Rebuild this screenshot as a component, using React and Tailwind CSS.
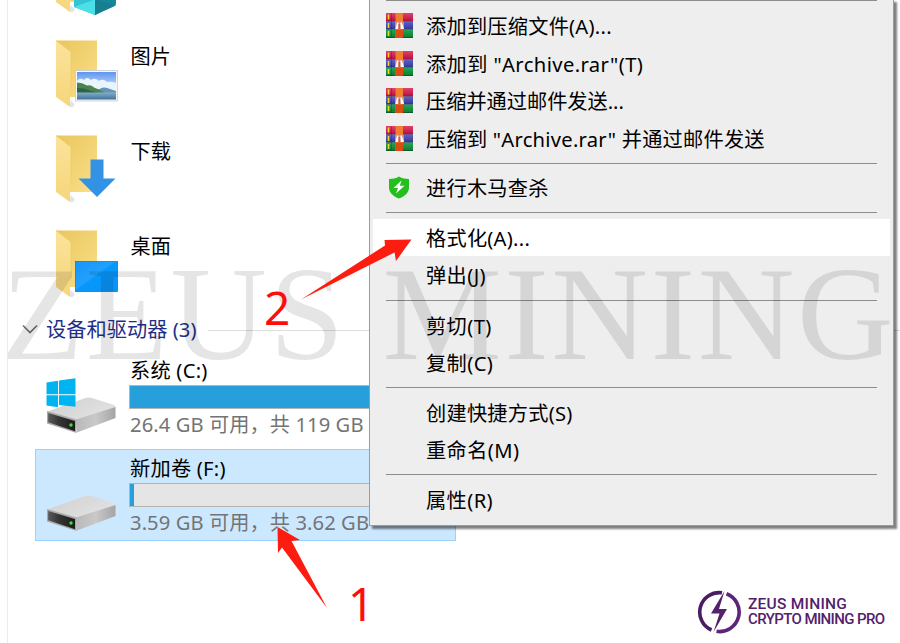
import clsx from 'clsx';

const MENU = [
  { type: 'item', icon: 'rar', label: '添加到压缩文件(A)...' },
  { type: 'item', icon: 'rar', label: '添加到 "Archive.rar"(T)', wide: true },
  { type: 'item', icon: 'rar', label: '压缩并通过邮件发送...', plain: true },
  { type: 'item', icon: 'rar', label: '压缩到 "Archive.rar" 并通过邮件发送' },
  { type: 'sep', size: 'h-[12px]' },
  { type: 'item', icon: 'shield', label: '进行木马查杀' },
  { type: 'sep', size: 'h-[12px]' },
  { type: 'item', label: '格式化(A)...', active: true },
  { type: 'item', label: '弹出(J)', wide: true },
  { type: 'sep', size: 'h-[13px]' },
  { type: 'item', label: '剪切(T)', wide: true },
  { type: 'item', label: '复制(C)', wide: true },
  { type: 'sep', size: 'h-[12px]' },
  { type: 'item', label: '创建快捷方式(S)' },
  { type: 'item', label: '重命名(M)', wide: true },
  { type: 'sep', size: 'h-[12.5px]' },
  { type: 'item', label: '属性(R)', wide: true },
];

const FOLDERS = [
  { kind: 'objects', label: '' },
  { kind: 'pictures', label: '图片' },
  { kind: 'downloads', label: '下载' },
  { kind: 'desktop', label: '桌面' },
];

const DRIVES = [
  { name: '系统 (C:)', info: '26.4 GB 可用，共 119 GB', used: 78, system: true },
  { name: '新加卷 (F:)', info: '3.59 GB 可用，共 3.62 GB', used: 1.2, selected: true },
];

const FolderIcon = ({ kind }) => (
  <svg width="66" height="70" viewBox="0 0 66 70" className="shrink-0">
    <defs>
      <linearGradient id="fBack" x1="0" y1="0" x2="1" y2="1">
        <stop offset="0" stopColor="#e9c55c" />
        <stop offset="1" stopColor="#fbe08a" />
      </linearGradient>
      <linearGradient id="fFront" x1="0" y1="0" x2="0" y2="1">
        <stop offset="0" stopColor="#fbe39a" />
        <stop offset="1" stopColor="#f6d67c" />
      </linearGradient>
      <linearGradient id="sky" x1="0" y1="0" x2="0" y2="1">
        <stop offset="0" stopColor="#5f95ee" />
        <stop offset="0.5" stopColor="#b8d6f8" />
        <stop offset="1" stopColor="#cfe4f4" />
      </linearGradient>
      <linearGradient id="lake" x1="0" y1="0" x2="0" y2="1">
        <stop offset="0" stopColor="#86aecb" />
        <stop offset="1" stopColor="#3f729c" />
      </linearGradient>
      <linearGradient id="desk" x1="0" y1="0" x2="1" y2="1">
        <stop offset="0" stopColor="#1496fb" />
        <stop offset="0.45" stopColor="#22a0fc" />
        <stop offset="0.5" stopColor="#0797fb" />
        <stop offset="1" stopColor="#0a93f5" />
      </linearGradient>
    </defs>
    <path d="M14 66l3 1.5 3-2.5-4-5z" fill="#e4e4e4" />
    <path d="M1 0.5h41V57H14z" fill="url(#fBack)" />
    <path d="M1 0.5L16 12v37l-1 1v17L1 57z" fill="url(#fFront)" />
    <path d="M1 0.5L16 12v37" fill="none" stroke="#eecb68" strokeWidth="0.8" />
    {kind === 'pictures' && (
      <g>
        <rect x="20.5" y="30.5" width="42" height="30.5" fill="#f6f9fc" stroke="#c3cad2" strokeWidth="0.8" />
        <rect x="22" y="32" width="39" height="27.5" fill="url(#sky)" />
        <path d="M22 41q3-4 7-1 3-4 7 0 4-3 8 1 4-3 8 1 5-1 9 1v8H22z" fill="#eaf4fd" />
        <path d="M40 52q7-6 12-4l9 3v2H40z" fill="#6295b8" />
        <path d="M22 42.5q5 0 10 3 4-1 7 2 6 2 12 6H22z" fill="#4a8350" />
        <path d="M22 48q8 0 14 3l8 2H22z" fill="#2c6546" />
        <rect x="22" y="52.5" width="39" height="7" fill="url(#lake)" />
      </g>
    )}
    {kind === 'downloads' && <path d="M35.5 24.5h13v19H60.5L42 62 23.5 43.5h12z" fill="#3492e4" />}
    {kind === 'desktop' && (
      <rect x="20.5" y="31.5" width="42" height="30" fill="url(#desk)" stroke="#0b7fd3" strokeWidth="0.8" />
    )}
    {kind === 'objects' && (
      <g>
        <path d="M19 45l21-9 21 9v13L40 70 19 62z" fill="#35c3d2" />
        <path d="M40 54.5l21-8v13L40 70z" fill="#14889a" />
        <path d="M40 54.5L19 62l21 8z" fill="#4be0e8" />
        <path d="M40 54.5l21 6L40 70z" fill="#177f90" />
      </g>
    )}
  </svg>
);

const DriveIcon = ({ system }) => (
  <svg width="74" height="56" viewBox="0 0 74 56" className="mt-[26px] shrink-0">
    <defs>
      <linearGradient id="dTop" x1="0" y1="0" x2="1" y2="0.6">
        <stop offset="0" stopColor="#cfcfcf" />
        <stop offset="1" stopColor="#e2e2e4" />
      </linearGradient>
      <linearGradient id="dSide" x1="0" y1="0" x2="1" y2="0">
        <stop offset="0" stopColor="#b9b9ba" />
        <stop offset="0.5" stopColor="#c9c9ca" />
        <stop offset="1" stopColor="#a4a4a6" />
      </linearGradient>
      <linearGradient id="dFace" x1="0" y1="0" x2="1" y2="0">
        <stop offset="0" stopColor="#5a5a5a" />
        <stop offset="0.4" stopColor="#353535" />
        <stop offset="1" stopColor="#1c1c1c" />
      </linearGradient>
    </defs>
    <path d="M1 33.500L38 20.500q4-1.500 8-0.500l22 7q2 1 1.500 3L31 42z" fill="url(#dTop)" />
    <path d="M30 41.500L69.500 29v11L31 54.500z" fill="url(#dSide)" />
    <path d="M1 33l29.500 8.500V55L1 45.500z" fill="#a9a9a9" />
    <path d="M2.200 35L29 43v10.200L2.200 44.300z" fill="url(#dFace)" />
    <circle cx="25" cy="47" r="1.700" fill="#3fe23c" />
    {system && (
      <path
        d="M0.500 4.500L12 2.800v13.500H0.500zM13 2.600L29.500 0.300v15.900H13zM0.500 17.300H12v12L0.500 27.500zM13 17.300h16.500v11.400L13 26.900z"
        fill="#00b4f1"
      />
    )}
  </svg>
);

const RarIcon = () => (
  <svg width="27" height="25" viewBox="0 0 27 25">
    <defs>
      <linearGradient id="rRed" x1="0" y1="0" x2="0" y2="1">
        <stop offset="0" stopColor="#e2416b" />
        <stop offset="1" stopColor="#b40f3e" />
      </linearGradient>
      <linearGradient id="rBlue" x1="0" y1="0" x2="0" y2="1">
        <stop offset="0" stopColor="#5b62c9" />
        <stop offset="1" stopColor="#333794" />
      </linearGradient>
      <linearGradient id="rGreen" x1="0" y1="0" x2="0" y2="1">
        <stop offset="0" stopColor="#26a552" />
        <stop offset="1" stopColor="#0b7a30" />
      </linearGradient>
    </defs>
    <rect width="27" height="8.500" fill="url(#rRed)" />
    <rect y="8.500" width="27" height="8" fill="url(#rBlue)" />
    <rect y="16.500" width="27" height="8.500" fill="url(#rGreen)" />
    <path d="M0 8.300h27M0 16.300h27M0 24.500h27" stroke="#1b1735" strokeOpacity="0.350" />
    <path d="M2.500 1.500v5M2.500 10v5M2.500 18v5" stroke="#f4d429" strokeWidth="1.600" />
    <path d="M5.500 0v25" stroke="#201838" strokeOpacity="0.300" />
    <rect x="9.500" width="7.500" height="25" fill="#f27d2c" />
    <rect x="9.500" y="16.500" width="7.500" height="8.500" fill="#da4d12" />
    <path d="M9 9.500q0-1 1-1h7q1 0 1 1V16H9z" fill="#d98a76" />
    <path d="M9.500 16l1.500-6.500h1.500L12.300 16zM14.300 9.500h1.500L18 16h-3.300z" fill="#fff" />
    <path d="M12.500 11h1.700v5h-1.700z" fill="#e0503c" />
  </svg>
);

const ShieldIcon = () => (
  <svg width="22" height="23" viewBox="0 0 22 23" className="-ml-[2px]">
    <path d="M11 0.500C14 2.300 17.500 3 21 3v8.500c0 5.500-4.500 9-10 11-5.500-2-10-5.500-10-11V3c3.500 0 7-0.700 10-2.500z" fill="#25bf1d" />
    <path d="M13.500 4.500L5.500 12h4.500l-2 5.500 8.500-7.800h-4.700z" fill="#fff" />
  </svg>
);

const Folder = ({ kind, label }) => (
  <div className="flex h-[95.200px] items-start">
    <FolderIcon kind={kind} />
    <span className="ml-[9.500px] leading-[32px]">{label}</span>
  </div>
);

const Drive = ({ name, info, used, system, selected }) => (
  <div
    className={clsx(
      'flex h-[92px] w-[421px] border pl-[10px]',
      selected ? 'border-[#99d1ff] bg-[#cce8ff]' : 'border-transparent'
    )}
  >
    <DriveIcon system={system} />
    <div className="ml-[9px] mt-[4px] flex-1">
      <div className="pl-px leading-[28px] tracking-[0.250px]">{name}</div>
      <div className="mt-px flex h-[24px] w-[310px] border border-[#b5b5b5] bg-[#e5e5e5]">
        <div className="bg-[#269fdb]" style={{ width: `${used}%` }} />
      </div>
      <div className="mt-px whitespace-nowrap pl-px leading-[29px] tracking-[0.080px] text-[#747474]">{info}</div>
    </div>
  </div>
);

const ContextMenu = () => (
  <div className="absolute -top-px left-[369px] w-[525px] border border-[#9b9b9b] bg-[#eeeeee] px-[3px] pb-[6px] text-black shadow-[3px_3px_2px_rgba(0,0,0,0.5)]">
    <div className="mx-[13px] h-[7px] border-t border-[#8c8c8c]" />
    {MENU.map((m, i) =>
      m.type === 'sep' ? (
        <div key={i} className={clsx('mx-[13px] flex items-center', m.size)}>
          <div className="h-px w-full bg-[#8c8c8c]" />
        </div>
      ) : (
        <div key={i} className={clsx('flex h-[37.500px] items-center', m.active && 'bg-white')}>
          <div className="flex w-[53px] justify-center">
            {m.icon === 'rar' && <RarIcon />}
            {m.icon === 'shield' && <ShieldIcon />}
          </div>
          <span
            className={clsx(
              'whitespace-nowrap pt-px leading-[28px]',
              m.wide ? 'tracking-[0.400px]' : m.plain ? 'tracking-normal' : 'tracking-[0.250px]'
            )}
          >
            {m.label}
          </span>
        </div>
      )
    )}
  </div>
);

const Brand = () => (
  <div className="absolute left-[697px] top-[590px] flex items-center text-[#54216b]">
    <svg width="45" height="44" viewBox="0 0 45 44">
      <path d="M25 2.800A19.500 19.500 0 0 0 14.500 40" fill="none" stroke="#4a1d60" strokeWidth="3.600" />
      <path d="M29.500 3.800A19.500 19.500 0 0 1 19.500 41.300" fill="none" stroke="#5d2578" strokeWidth="3.600" />
      <path d="M27.500 1L14 23.500h8.500L16.500 42 30 19h-8z" fill="#54216b" />
    </svg>
    <div className="ml-[6px] whitespace-nowrap font-[Roboto,sans-serif] font-medium leading-[15.500px]">
      <div className="text-[15.500px] tracking-[0.250px]">ZEUS MINING</div>
      <div className="text-[15px] tracking-[-0.600px]">CRYPTO MINING PRO</div>
    </div>
  </div>
);

export default function App() {
  return (
    <div className="relative h-[643px] w-[900px] overflow-hidden bg-white font-['Noto_Sans','Noto_Sans_CJK_SC',sans-serif] text-[20.200px] text-black">
      <div className="ml-[7px] flow-root h-full border-l border-[#ececec]">
        <div className="-mt-[55.500px] pl-[47px]">
          {FOLDERS.map((f) => (
            <Folder key={f.kind} {...f} />
          ))}
        </div>
        <div className="-mt-[10.500px] flex h-[28px] items-center pl-[14px] text-[#1e2f87]">
          <svg width="16" height="10" viewBox="0 0 16 10" fill="none" stroke="#6d6d6d" strokeWidth="1.600">
            <path d="M1 1.500l7 7 7-7" />
          </svg>
          <span className="ml-[8px] whitespace-nowrap tracking-[0.050px]">设备和驱动器 (3)</span>
          <div className="ml-[11px] mt-[3px] h-px flex-1 bg-[#dedede]" />
        </div>
        <div className="mt-[8px] flex flex-col gap-[6px] pl-[27px]">
          {DRIVES.map((d) => (
            <Drive key={d.name} {...d} />
          ))}
        </div>
      </div>

      <ContextMenu />

      {/* Watermark */}
      <div className="absolute left-[1.500px] top-[240px] whitespace-nowrap font-['Liberation_Serif',serif] text-[134px] leading-[148px] tracking-[2.500px] text-black/10">
        ZEUS MINING
      </div>

      {/* Step markers */}
      <svg width="900" height="643" viewBox="0 0 900 643" className="pointer-events-none absolute inset-0" fill="#fd1d10">
        <path d="M301 299.500L385 245.500 384.500 240 411.500 239.500 396 261 394.500 252.500z" />
        <path d="M277.500 527L300 540 291.500 541 327 608 282 547.500 278 553z" />
      </svg>
      <span className="absolute left-[264px] top-[275px] text-[46px] leading-[64px] text-[#ff0d0d]">2</span>
      <span className="absolute left-[348px] top-[571px] text-[46px] leading-[64px] text-[#ff0d0d]">1</span>

      <Brand />
    </div>
  );
}
